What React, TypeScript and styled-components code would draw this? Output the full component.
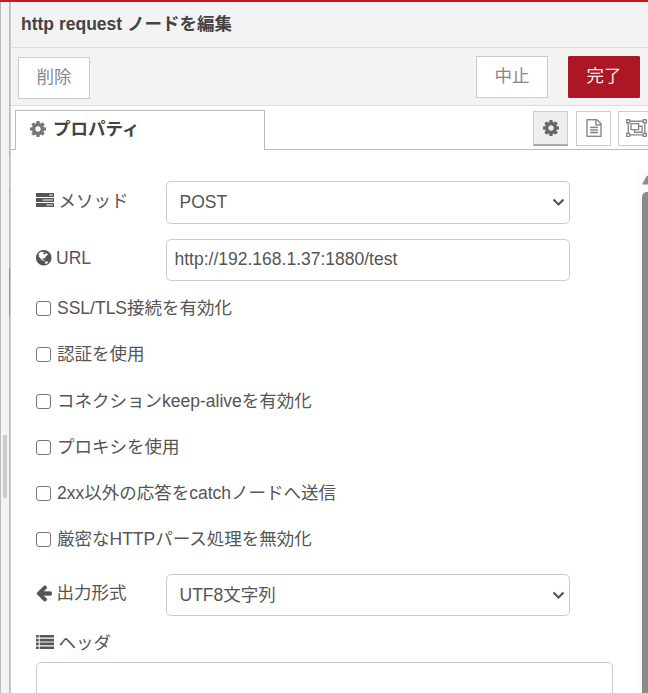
import React from 'react';
import styled, { createGlobalStyle } from 'styled-components';

const Global = createGlobalStyle`
  *, *::before, *::after { box-sizing: border-box; }
  html, body { margin: 0; height: 100%; overflow: hidden; background: #fff; }
  body, input, select, button, textarea {
    font-family: "Liberation Sans", "Noto Sans CJK JP", sans-serif;
    font-size: 17.5px;
    color: #555;
  }
`;

const Window = styled.div`
  display: flex;
  width: 648px;
  height: 693px;
  overflow: hidden;
  border-top: 2px solid #c61a22;
`;

const Splitter = styled.div`
  display: flex;
  align-items: flex-start;
  flex: none;
  width: 9px;
  padding: 433px 0 0 2px;
  background: #f3f3f3;
  border-left: 1px solid #bbb;
`;

const Grip = styled.div`
  width: 4px;
  height: 63px;
  background: #ccc;
`;

const CanvasEdge = styled.div`
  flex: none;
  width: 2px;
  background: linear-gradient(to bottom,
    #bbb 0 150px, #c9a27a 150px 152px, #c5c4ab 152px 187px, #c9a27a 187px 189px, #bbb 189px 266px,
    #5a9fc4 266px 277px, #8f9f90 277px 314px, #bbb 314px);
  border-right: 1px solid #ccc;
`;

const Tray = styled.main`
  display: flex;
  flex-direction: column;
  flex: 1;
  min-width: 0;
  background: #fff;
`;

const Title = styled.header`
  flex: none;
  height: 46px;
  padding: 1px 0 0 10px;
  line-height: 43px;
  font-weight: 700;
  color: #444;
  background: #f3f3f3;
  border-bottom: 1px solid #ddd;
  white-space: nowrap;
`;

const Toolbar = styled.div`
  display: flex;
  align-items: flex-start;
  flex: none;
  height: 58px;
  padding: 8px 8px 0 7px;
  background: #f3f3f3;
  border-bottom: 1px solid #ddd;
`;

const Spacer = styled.div`
  flex: 1;
`;

const Button = styled.button<{ $primary?: boolean; $drop?: number }>`
  width: 72px;
  height: 42px;
  margin: ${p => p.$drop ?? 0}px 0 0;
  padding: 0 0 5px;
  border: 1px solid ${p => (p.$primary ? '#ad1625' : '#ccc')};
  border-radius: ${p => (p.$primary ? 1 : 0)}px;
  background: ${p => (p.$primary ? '#ad1625' : '#fff')};
  color: ${p => (p.$primary ? '#eee' : '#888')};
  & + & { margin-left: 20px; }
`;

const TabBar = styled.div`
  display: flex;
  align-items: flex-start;
  flex: none;
  height: 44px;
  padding: 4px 0 0 4px;
  background: linear-gradient(#bbb, #bbb) bottom / 100% 1px no-repeat;
`;

const Tab = styled.div`
  display: flex;
  align-items: center;
  gap: 7px;
  width: 250px;
  height: 40px;
  padding: 0 0 3px 14px;
  border: 1px solid #bbb;
  border-bottom: 0;
  background: #fff;
  font-weight: 700;
  color: #444;
  & > svg { color: #777; }
`;

const TabText = styled.span`
  margin-top: -3px;
`;

const TabButtons = styled.div`
  display: flex;
  gap: 8px;
  width: 115px;
  padding-top: 1px;
  overflow: hidden;
`;

const IconButton = styled.button<{ $active?: boolean }>`
  display: flex;
  align-items: center;
  justify-content: center;
  flex: none;
  width: 35px;
  height: 35px;
  padding: 0 0 1px;
  border: 1px solid #ccc;
  border-bottom: ${p => (p.$active ? '2px solid #aaa' : '1px solid #ccc')};
  background: ${p => (p.$active ? '#efefef' : '#fff')};
  color: ${p => (p.$active ? '#666' : '#888')};
  &:last-child { margin-left: -1px; padding-left: 2px; }
`;

const Body = styled.div`
  display: flex;
  flex: 1;
  min-height: 0;
`;

const Form = styled.div`
  flex: 1;
  min-width: 0;
  padding: 31px 0 0 25px;
`;

const Field = styled.div<{ $height: number; $gap: number }>`
  display: flex;
  height: ${p => p.$height}px;
  margin-bottom: ${p => p.$gap}px;
`;

const Label = styled.label`
  display: flex;
  align-items: center;
  gap: 4.5px;
  flex: none;
  width: 130px;
  height: 38px;
  white-space: nowrap;
`;

const LabelText = styled.span<{ $raise?: number }>`
  margin-top: ${p => -(p.$raise ?? 2)}px;
`;

const TextInput = styled.input`
  width: 404px;
  height: 100%;
  padding: 0 8px 2px 7.5px;
  border: 1px solid #ccc;
  border-radius: 5px;
  background: #fff;
  outline: none;
`;

const SelectBox = styled.div`
  display: flex;
  align-items: center;
  width: 404px;
  height: 100%;
  padding-right: 4px;
  border: 1px solid #ccc;
  border-radius: 5px;
`;

const Select = styled.select<{ $lift?: number }>`
  flex: 1;
  height: 100%;
  padding: 0 0 ${p => p.$lift ?? 0}px 12.5px;
  border: 0;
  background: transparent;
  appearance: none;
  outline: none;
`;

const Option = styled.label`
  display: flex;
  align-items: center;
  height: 46.25px;
  gap: 6px;
  white-space: nowrap;
`;

const OptionText = styled.span`
  margin-top: -4px;
`;

const Checkbox = styled.input`
  flex: none;
  width: 15px;
  height: 15px;
  margin: 0;
  border: 1.25px solid #767676;
  border-radius: 3px;
  background: #fff;
  appearance: none;
`;

const Options = styled.div`
  height: 293px;
  padding-top: 4.4px;
`;

const HeaderList = styled.div`
  width: 577px;
  height: 120px;
  border: 1px solid #ccc;
  border-radius: 5px;
`;

const ScrollTrack = styled.div`
  flex: none;
  width: 10px;
  margin-top: 19px;
  padding: 6px 0 0 4px;
  background: #fcfcfc;
  overflow: hidden;
`;

const ScrollThumb = styled.div`
  width: 10px;
  height: 600px;
  margin-top: 7px;
  border-radius: 5px 5px 0 0;
  background: #8b8b8b;
`;

const Glyph = styled.svg`
  display: block;
  flex: none;
  fill: currentColor;
`;

const COG = 'M1152 896q0-106-75-181t-181-75-181 75-75 181 75 181 181 75 181-75 75-181zm512-109v222q0 12-8 23t-20 13l-185 28q-19 54-39 91 35 50 107 138 10 12 10 25t-9 23q-27 37-99 108t-94 71q-12 0-26-9l-138-108q-44 23-91 38-16 136-29 186-7 28-36 28h-222q-14 0-24.5-8.5t-11.5-21.5l-28-184q-49-16-90-37l-141 107q-10 9-25 9-14 0-25-11-126-114-165-168-7-10-7-23 0-12 8-23 15-21 51-66.5t54-70.5q-27-50-41-99l-183-27q-13-2-21-12.5t-8-23.5v-222q0-12 8-23t19-13l186-28q14-46 39-92-40-57-107-138-10-12-10-24 0-10 9-23 26-36 98.5-107.5t94.5-71.5q13 0 26 10l138 107q44-23 91-38 16-136 29-186 7-28 36-28h222q14 0 24.5 8.5t11.5 21.5l28 184q49 16 90 37l142-107q9-9 24-9 13 0 25 10 129 119 165 170 7 8 7 22 0 12-8 23-15 21-51 66.5t-54 70.5q26 50 41 98l183 28q13 2 21 12.5t8 23.5z';
const FILE = 'M1596 380q28 28 48 76t20 88v1152q0 40-28 68t-68 28h-1344q-40 0-68-28t-28-68v-1600q0-40 28-68t68-28h896q40 0 88 20t76 48zm-444-244v376h376q-10-29-22-41l-313-313q-12-12-41-22zm384 1528v-1024h-416q-40 0-68-28t-28-68v-416h-768v1536h1280zm-1024-864q0-14 9-23t23-9h704q14 0 23 9t9 23v64q0 14-9 23t-23 9h-704q-14 0-23-9t-9-23v-64zm736 224q14 0 23 9t9 23v64q0 14-9 23t-23 9h-704q-14 0-23-9t-9-23v-64q0-14 9-23t23-9h704zm0 256q14 0 23 9t9 23v64q0 14-9 23t-23 9h-704q-14 0-23-9t-9-23v-64q0-14 9-23t23-9h704z';
const ARROW = 'M1664 896v128q0 53-32.5 90.5t-84.5 37.5h-704l293 294q38 36 38 90t-38 90l-75 76q-37 37-90 37-52 0-91-37l-651-652q-37-37-37-90 0-52 37-91l651-650q38-38 91-38 52 0 90 38l75 74q38 38 38 91t-38 91l-293 293h704q52 0 84.5 37.5t32.5 90.5z';
const GLOBE = 'M896 128q209 0 385.5 103t279.5 279.5 103 385.5-103 385.5-279.5 279.5-385.5 103-385.5-103-279.5-279.5-103-385.5 103-385.5 279.5-279.5 385.5-103zm274 521q-2 1-9.5 9.5t-13.5 9.5q2 0 4.5-5t5-11 3.5-7q6-7 22-15 14-6 52-12 34-8 51 11-2-2 9.5-13t14.5-12q3-2 15-4.5t15-7.5l2-22q-12 1-17.5-7t-6.5-21q0 2-6 8 0-7-4.5-8t-11.5 1-9 1q-10-3-15-7.5t-8-16.5-4-15q-2-5-9.5-11t-9.5-10q-1-2-2.5-5.5t-3-6.5-4-5.5-5.5-2.5-7 5-7.5 10-4.5 5q-3-2-6-1.5t-4.5 1-4.5 3-5 3.5q-3 2-8.5 3t-8.5 2q15-5-1-11-10-4-16-3 9-4 7.5-12t-8.5-14h5q-1-4-8.5-8.5t-17.5-8.5-13-6q-8-5-34-9.5t-33-.5q-5 6-4.5 10.5t4 14 3.5 12.5q1 6-5.5 13t-6.5 12q0 7 14 15.5t10 21.5q-3 8-16 16t-16 12q-5 8-1.5 18.5t10.5 16.5q2 2 1.5 4t-3.5 4.5-5.5 4-6.5 3.5l-3 2q-11 5-20.5-6t-13.5-26q-7-25-16-30-23-8-29 1-5-13-41-26-25-9-58-4 6-1 0-15-7-15-19-12 3-6 4-17.5t1-13.5q3-13 12-23 1-1 7-8.5t9.5-13.5.5-6q35 4 50-11 5-5 11.5-17t10.5-17q9-6 14-5.5t14.5 5.5 14.5 5q14 1 15.5-11t-7.5-20q12 1 3-17-4-7-8-9-12-4-27 5-8 4 2 8-1-1-9.5 10.5t-16.5 17.5-16-5q-1-1-5.5-13.5t-9.5-13.5q-8 0-16 15 3-8-11-15t-24-8q19-12-8-27-7-4-20.5-5t-19.5 4q-5 7-5.5 11.5t5 8 10.5 5.5 11.5 4 8.5 3q14 10 8 14-2 1-8.5 3.5t-11.5 4.5-6 4q-3 4 0 14t-2 14q-5-5-9-17.5t-7-16.5q7 9-25 6l-10-1q-4 0-16 2t-20.5 1-13.5-8q-4-8 0-20 1-4 4-2-4-3-11-9.5t-10-8.5q-46 15-94 41 6 1 12-1 5-2 13-6.5t10-5.5q34-14 42-7l5-5q14 16 20 25-7-4-30-1-20 6-22 12 7 12 5 18-4-3-11.5-10t-14.5-11-15-5q-16 0-22 1-146 80-235 222 7 7 12 8 4 1 5 9t2.5 11 11.5-3q9 8 3 19 1-1 44 27 19 17 21 21 3 11-10 18-1-2-9-9t-9-4q-3 5 .5 18.5t10.5 12.5q-7 0-9.5 16t-2.5 35.5-1 23.5l2 1q-3 12 5.5 34.5t21.5 19.5q-13 3 20 43 6 8 8 9 3 2 12 7.5t15 10 10 10.5q4 5 10 22.5t14 23.5q-2 6 9.5 20t10.5 23q-1 0-2.5 1t-2.5 1q3 7 15.5 14t15.5 13q1 3 2 10t3 11 8 2q2-20-24-62-15-25-17-29-3-5-5.5-15.5t-4.5-14.5q2 0 6 1.5t8.5 3.5 7.5 4 2 3q-3 7 2 17.5t12 18.5 17 19 12 13q6 6 14 19.5t0 13.5q9 0 20 10.5t17 19.5q5 8 8 26t5 24q2 7 8.5 13.5t12.5 9.5l16 8 13 7q5 2 18.5 10.5t21.5 11.5q10 4 16 4t14.5-2.5 13.5-3.5q15-2 29 15t21 21q36 19 55 11-2 1 .5 7.5t8 15.5 9 14.5 5.5 8.5q5 6 18 15t18 15q6-4 7-9-3 8 7 20t18 10q14-3 14-32-31 15-49-18 0-1-2.5-5.5t-4-8.5-2.5-8.5 0-7.5 5-3q9 0 10-3.5t-2-12.5-4-13q-1-8-11-20t-12-15q-5 9-16 8t-16-9q0 1-1.5 5.5t-1.5 6.5q-13 0-15-1 1-3 2.5-17.5t3.5-22.5q1-4 5.5-12t7.5-14.5 4-12.5-4.5-9.5-17.5-2.5q-19 1-26 20-1 3-3 10.5t-5 11.5-9 7q-7 3-24 2t-24-5q-13-8-22.5-29t-9.5-37q0-10 2.5-26.5t3-25-5.5-24.5q3-2 9-9.5t10-10.5q2-1 4.5-1.5t4.5 0 4-1.5 3-6q-1-1-4-3-3-3-4-3 7 3 28.5-1.5t27.5 1.5q15 11 22-2 0-1-2.5-9.5t-.5-13.5q5 27 29 9 3 3 15.5 5t17.5 5q3 2 7 5.5t5.5 4.5 5-.5 8.5-6.5q10 14 12 24 11 40 19 44 7 3 11 2t4.5-9.5 0-14-1.5-12.5l-1-8v-18l-1-8q-15-3-18.5-12t1.5-18.5 15-18.5q1-1 8-3.5t15.5-6.5 12.5-8q21-19 15-35 7 0 11-9-1 0-5-3t-7.5-5-4.5-2q9-5 2-16 5-3 7.5-11t7.5-10q9 12 21 2 8-8 1-16 5-7 20.5-10.5t18.5-9.5q7 2 8-2t1-12 3-12q4-5 15-9t13-5l17-11q3-4 0-4 18 2 31-11 10-11-6-20 3-6-3-9.5t-15-5.5q3-1 11.5-.5t10.5-1.5q15-10-7-16-17-5-43 12zm-163 877q206-36 351-189-3-3-12.5-4.5t-12.5-3.5q-18-7-24-8 1-7-2.5-13t-8-9-12.5-8-11-7q-2-2-7-6t-7-5.5-7.5-4.5-8.5-2-10 1l-3 1q-3 1-5.5 2.5t-5.5 3-4 3 0 2.5q-21-17-36-22-5-1-11-5.5t-10.5-7-10-1.5-11.5 7q-5 5-6 15t-2 13q-7-5 0-17.5t2-18.5q-3-6-10.5-4.5t-12 4.5-11.5 8.5-9 6.5-8.5 5.5-8.5 7.5q-3 4-6 12t-5 11q-2-4-11.5-6.5t-9.5-5.5q2 10 4 35t5 38q7 31-12 48-27 25-29 40-4 22 12 26 0 7-8 20.5t-7 21.5q0 6 2 16z';

const CogIcon = () => <Glyph width="16" height="16" viewBox="128 128 1536 1536"><path d={COG} /></Glyph>;
const FileIcon = () => (
  <Glyph width="16" height="18" viewBox="128 0 1536 1792">
    <path d={FILE} stroke="currentColor" strokeWidth="24" />
  </Glyph>
);
const GlobeIcon = () => <Glyph width="15.5" height="15.5" viewBox="128 128 1536 1536"><path d={GLOBE} /></Glyph>;
const ArrowIcon = () => (
  <Glyph width="16" height="17" viewBox="100 180 1580 1560">
    <path d={ARROW} stroke="currentColor" strokeWidth="40" />
  </Glyph>
);

const TasksIcon = () => (
  <Glyph width="18" height="14" viewBox="0 0 18 14">
    <path
      fillRule="evenodd"
      d="M.5 0h17q.5 0 .5.5v3q0 .5-.5.5H.5Q0 4 0 3.5v-3Q0 0 .5 0zM13 1.4v1.2h3.8V1.4zM.5 5h17q.5 0 .5.5v3q0 .5-.5.5H.5Q0 9 0 8.5v-3Q0 5 .5 5zM6.6 6.4v1.2h10.2V6.4zM.5 10h17q.5 0 .5.5v3q0 .5-.5.5H.5q-.5 0-.5-.5v-3q0-.5.5-.5zM10.4 11.4v1.2h6.4v-1.2z"
    />
  </Glyph>
);

const ListIcon = () => (
  <Glyph width="18" height="14" viewBox="0 0 18 14">
    {[0, 3.8, 7.6, 11.4].map(y => (
      <g key={y}>
        <rect x="0" y={y} width="2.7" height="2.6" rx=".2" />
        <rect x="3.7" y={y} width="14.3" height="2.6" rx=".2" />
      </g>
    ))}
  </Glyph>
);

const GroupIcon = () => (
  <Glyph width="21" height="18" viewBox="0 0 21 18">
    <g fill="none" stroke="currentColor" strokeWidth="1.35">
      <path d="M4 2.2h13M4 15.8h13M2.2 4v10M18.8 4v10" />
      <path d="M.7.7h3v3h-3zM17.3.7h3v3h-3zM.7 14.3h3v3h-3zM17.3 14.3h3v3h-3z" />
      <path d="M5 4.6h7.6v6H5zM12.6 7.2h3.4v6H8.6v-2.6" />
    </g>
  </Glyph>
);

const Chevron = () => (
  <Glyph width="13" height="9" viewBox="0 0 13 9">
    <path d="M1.5 1.5 6.5 6.5 11.5 1.5" fill="none" stroke="#555" strokeWidth="2.2" />
  </Glyph>
);

const OPTIONS = [
  'SSL/TLS接続を有効化',
  '認証を使用',
  'コネクションkeep-aliveを有効化',
  'プロキシを使用',
  '2xx以外の応答をcatchノードへ送信',
  '厳密なHTTPパース処理を無効化',
];

export default function App() {
  return (
    <>
      <Global />
      <Window>
        <Splitter><Grip /></Splitter>
        <CanvasEdge />
        <Tray>
          <Title>http request ノードを編集</Title>
          <Toolbar>
            <Button $drop={1}>削除</Button>
            <Spacer />
            <Button>中止</Button>
            <Button $primary>完了</Button>
          </Toolbar>
          <TabBar>
            <Tab><CogIcon /><TabText>プロパティ</TabText></Tab>
            <Spacer />
            <TabButtons>
              <IconButton $active aria-label="プロパティ"><CogIcon /></IconButton>
              <IconButton aria-label="説明"><FileIcon /></IconButton>
              <IconButton aria-label="外観"><GroupIcon /></IconButton>
            </TabButtons>
          </TabBar>
          <Body>
            <Form>
              <Field $height={43} $gap={15}>
                <Label><TasksIcon /><LabelText>メソッド</LabelText></Label>
                <SelectBox>
                  <Select $lift={2} defaultValue="POST"><option>POST</option></Select>
                  <Chevron />
                </SelectBox>
              </Field>
              <Field $height={42} $gap={0}>
                <Label><GlobeIcon /><LabelText $raise={0}>URL</LabelText></Label>
                <TextInput defaultValue="http://192.168.1.37:1880/test" />
              </Field>
              <Options>
                {OPTIONS.map(text => (
                  <Option key={text}>
                    <Checkbox type="checkbox" />
                    <OptionText>{text}</OptionText>
                  </Option>
                ))}
              </Options>
              <Field $height={42} $gap={7}>
                <Label><ArrowIcon /><LabelText $raise={3}>出力形式</LabelText></Label>
                <SelectBox>
                  <Select defaultValue="UTF8文字列"><option>UTF8文字列</option></Select>
                  <Chevron />
                </SelectBox>
              </Field>
              <Field $height={39} $gap={0}>
                <Label><ListIcon /><LabelText>ヘッダ</LabelText></Label>
              </Field>
              <HeaderList />
            </Form>
            <ScrollTrack>
              <Glyph width="14" height="10" viewBox="0 0 14 10">
                <path d="M1.2 9.5Q0 9.5.6 8.2L4.4 1.6Q6 0 8.6 0L13.4 8.2Q14 9.5 12.8 9.5Z" fill="#8b8b8b" />
              </Glyph>
              <ScrollThumb />
            </ScrollTrack>
          </Body>
        </Tray>
      </Window>
    </>
  );
}
